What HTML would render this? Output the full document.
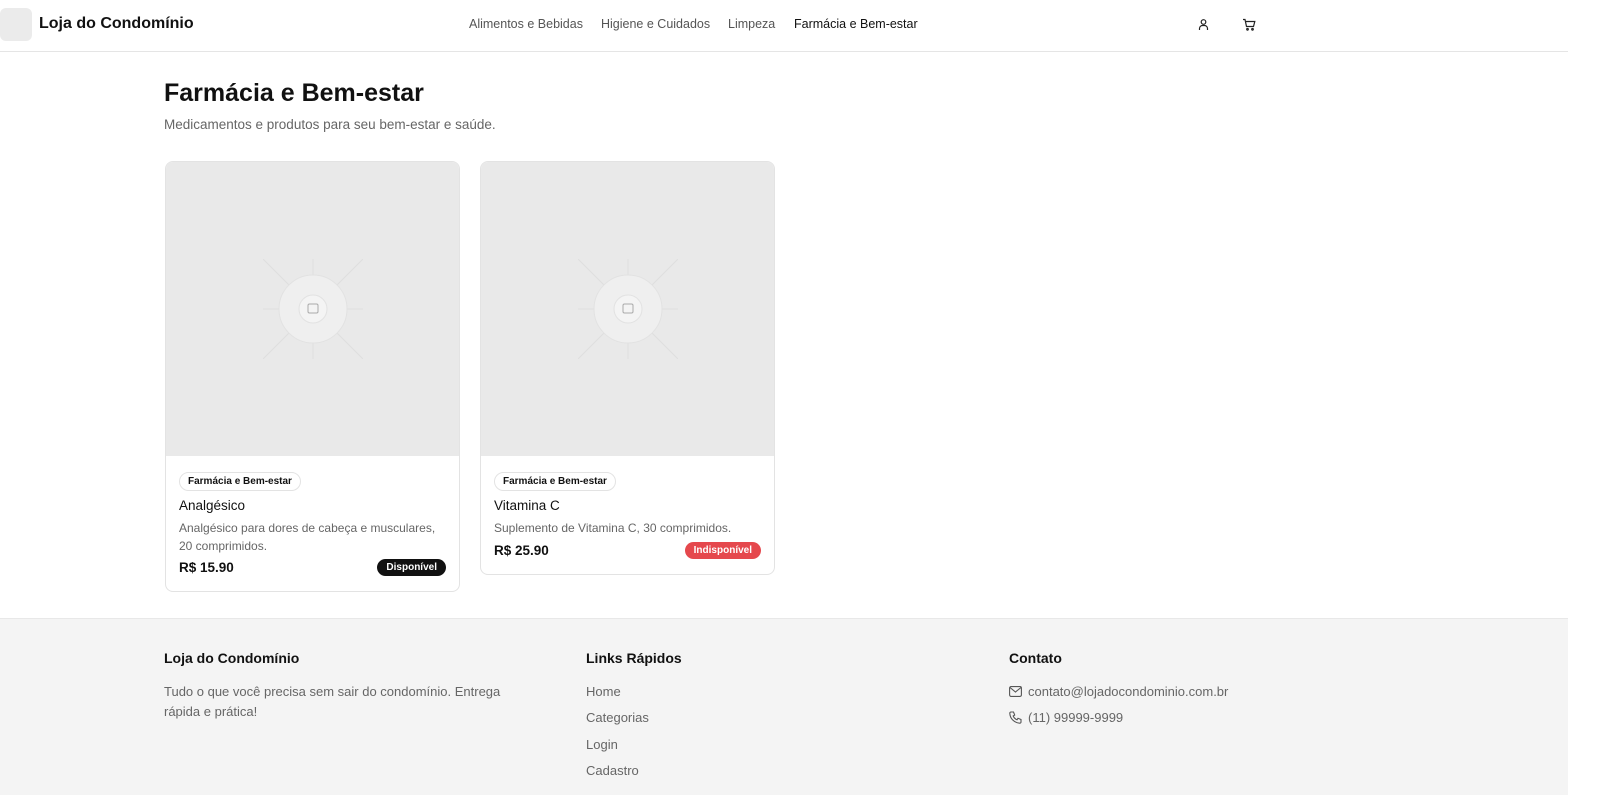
<!DOCTYPE html>
<html><head><meta charset="utf-8"><style>
*{box-sizing:border-box;margin:0;padding:0}
body{width:1600px;height:795px;overflow:hidden;background:#fff;font-family:"Liberation Sans",sans-serif;color:#111;position:relative}
.hdr{position:absolute;left:0;top:0;width:1568px;height:52px;border-bottom:1px solid #e5e5e5}
.logo{position:absolute;left:0;top:8px;width:32px;height:33px;background:#ebebeb;border-radius:6px}
.brand{position:absolute;left:39px;top:15px;font-size:16px;font-weight:bold}
.nav{position:absolute;top:17px;font-size:12.5px;color:#555}
.t{position:absolute}
.card{position:absolute;top:161px;width:295px;border:1px solid #e3e3e3;border-radius:8px;overflow:hidden;background:#fff}
.img{height:294px;background:#e9e9e9;position:relative}
.pill{position:absolute;left:13px;top:15px;font-size:10px;font-weight:bold;border:1px solid #e3e3e3;border-radius:10px;padding:3px 8px}
.name{position:absolute;left:13px;top:42px;font-size:13.5px;font-weight:500}
.desc{position:absolute;left:13px;top:63px;font-size:12px;color:#666;line-height:18px;width:268px}
.price{position:absolute;left:13px;font-size:13.5px;font-weight:bold}
.badge{position:absolute;right:13px;font-size:10px;font-weight:bold;color:#fff;border-radius:9px;padding:3px 9px}
.foot{position:absolute;left:0;top:618px;width:1568px;height:177px;background:#f4f4f4;border-top:1px solid #e8e8e8}
.fh{position:absolute;top:31px;font-size:14px;font-weight:bold}
.fl{position:absolute;font-size:13px;color:#666;line-height:20px}
</style></head><body>
<div class="hdr">
<div class="logo"></div><div class="brand">Loja do Condomínio</div>
<div class="nav" style="left:469px">Alimentos e Bebidas</div>
<div class="nav" style="left:601px">Higiene e Cuidados</div>
<div class="nav" style="left:728px">Limpeza</div>
<div class="nav" style="left:794px;color:#111">Farmácia e Bem-estar</div>
<svg class="t" style="left:1197px;top:18px" width="13" height="13" viewBox="0 0 13 13" fill="none" stroke="#222" stroke-width="1.2"><circle cx="6.5" cy="4" r="2.3"/><path d="M2.5 12v-1.5a3 3 0 0 1 3-3h2a3 3 0 0 1 3 3V12"/></svg>
<svg class="t" style="left:1242px;top:18px" width="14" height="13" viewBox="0 0 14 13" fill="none" stroke="#222" stroke-width="1.2"><path d="M1 1.5h2l1.5 7h7l1.3-5H4"/><circle cx="5.5" cy="11.3" r=".8"/><circle cx="10.5" cy="11.3" r=".8"/></svg>
</div>
<div class="t" style="left:164px;top:79px;font-size:25px;font-weight:bold">Farmácia e Bem-estar</div>
<div class="t" style="left:164px;top:117px;font-size:13.5px;color:#666">Medicamentos e produtos para seu bem-estar e saúde.</div>

<div class="card" style="left:165px;height:431px">
<div class="img"><svg class="t" style="left:97px;top:97px" width="100" height="100" viewBox="0 0 100 100" stroke="#dedede" stroke-width="1" fill="none"><path d="M0 0L100 100M100 0L0 100M50 0V100M0 50H100"/><circle cx="50" cy="50" r="34" fill="#efefef" stroke="#e2e2e2"/><circle cx="50" cy="50" r="14" fill="#f4f4f4" stroke="#e2e2e2"/><rect x="45" y="45" width="10" height="9" rx="1.5" stroke="#aaa"/></svg></div>
<div class="pill" style="top:310px">Farmácia e Bem-estar</div>
<div class="name" style="top:336px">Analgésico</div>
<div class="desc" style="top:357px">Analgésico para dores de cabeça e musculares, 20 comprimidos.</div>
<div class="price" style="top:398px">R$ 15.90</div>
<div class="badge" style="top:397px;background:#111">Disponível</div>
</div>

<div class="card" style="left:480px;height:414px">
<div class="img"><svg class="t" style="left:97px;top:97px" width="100" height="100" viewBox="0 0 100 100" stroke="#dedede" stroke-width="1" fill="none"><path d="M0 0L100 100M100 0L0 100M50 0V100M0 50H100"/><circle cx="50" cy="50" r="34" fill="#efefef" stroke="#e2e2e2"/><circle cx="50" cy="50" r="14" fill="#f4f4f4" stroke="#e2e2e2"/><rect x="45" y="45" width="10" height="9" rx="1.5" stroke="#aaa"/></svg></div>
<div class="pill" style="top:310px">Farmácia e Bem-estar</div>
<div class="name" style="top:336px">Vitamina C</div>
<div class="desc" style="top:357px">Suplemento de Vitamina C, 30 comprimidos.</div>
<div class="price" style="top:381px">R$ 25.90</div>
<div class="badge" style="top:380px;background:#e5484d">Indisponível</div>
</div>

<div class="foot">
<div class="fh" style="left:164px">Loja do Condomínio</div>
<div class="fl" style="left:164px;top:63px;width:370px">Tudo o que você precisa sem sair do condomínio. Entrega rápida e prática!</div>
<div class="fh" style="left:586px">Links Rápidos</div>
<div class="fl" style="left:586px;top:63px">Home</div>
<div class="fl" style="left:586px;top:89px">Categorias</div>
<div class="fl" style="left:586px;top:116px">Login</div>
<div class="fl" style="left:586px;top:142px">Cadastro</div>
<div class="fh" style="left:1009px">Contato</div>
<svg class="t" style="left:1009px;top:67px" width="13" height="11" viewBox="0 0 13 11" fill="none" stroke="#555" stroke-width="1.1"><rect x=".6" y=".6" width="11.8" height="9.8" rx="1.5"/><path d="M1 1.5l5.5 4.5 5.5-4.5"/></svg>
<div class="fl" style="left:1028px;top:63px">contato@lojadocondominio.com.br</div>
<svg class="t" style="left:1009px;top:92px" width="13" height="13" viewBox="0 0 13 13" fill="none" stroke="#555" stroke-width="1.1"><path d="M2 1h2.5l1.2 3-1.5 1a7 7 0 0 0 3.8 3.8l1-1.5 3 1.2V11a1.2 1.2 0 0 1-1.3 1.2A10.5 10.5 0 0 1 .8 2.3 1.2 1.2 0 0 1 2 1z"/></svg>
<div class="fl" style="left:1028px;top:89px">(11) 99999-9999</div>
</div>
</body></html>
